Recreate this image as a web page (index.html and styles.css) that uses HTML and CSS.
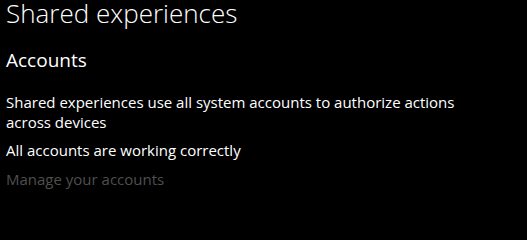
FILE: index.html
```html
<!DOCTYPE html>
<html>
<head>
<meta charset="utf-8">
<link rel="stylesheet" href="styles.css">
</head>
<body>
<div class="page">
  <h1 class="title">Shared experiences</h1>
  <h2 class="section">Accounts</h2>
  <p class="desc">Shared experiences use all system accounts to authorize actions across devices</p>
  <p class="status">All accounts are working correctly</p>
  <a class="link">Manage your accounts</a>
</div>
</body>
</html>
```
FILE: styles.css
```css
html, body {
  margin: 0;
  padding: 0;
  background: #000;
}
.page {
  padding: 0 0 0 6px;
  color: #fff;
  font-family: "Open Sans", "Noto Sans", sans-serif;
  width: 480px;
}
.title {
  margin: 0;
  font-weight: 300;
  font-size: 26px;
  line-height: 26px;
}
.section {
  margin: 21px 0 0 0;
  font-weight: 400;
  font-size: 19px;
  line-height: 26px;
}
.desc {
  margin: 20px 0 0 0;
  font-size: 15px;
  line-height: 19.5px;
}
.status {
  margin: 9px 0 0 0;
  font-size: 15px;
  line-height: 19.5px;
}
.link {
  display: block;
  margin-top: 9px;
  font-size: 15px;
  line-height: 19.5px;
  color: #4f4f4f;
}
```
